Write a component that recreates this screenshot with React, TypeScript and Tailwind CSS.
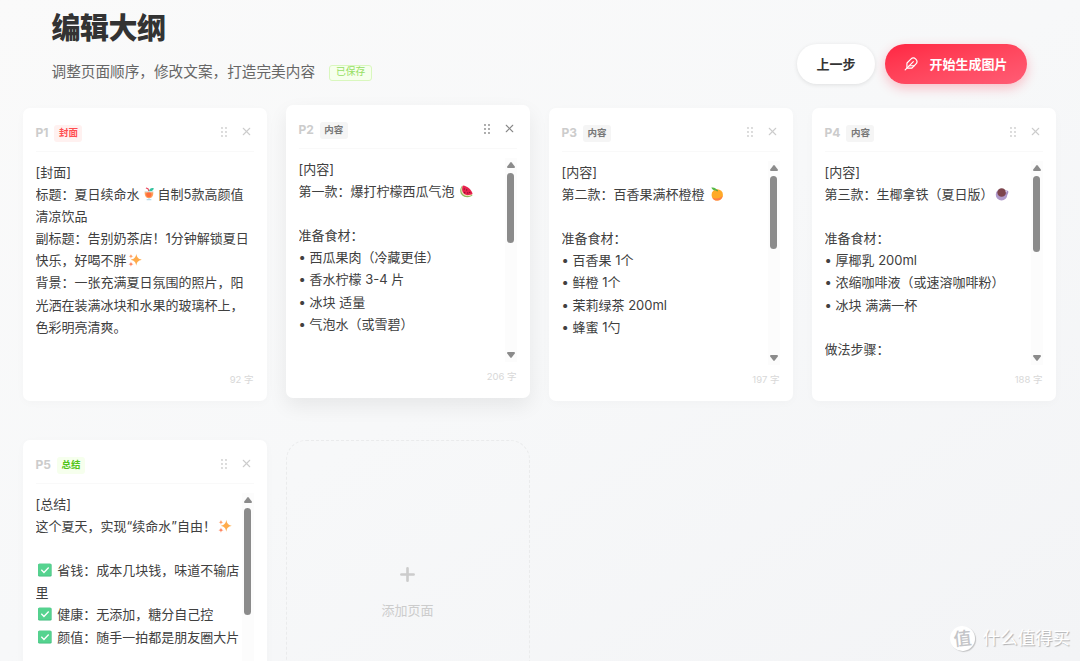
import type { ReactNode } from "react";
import { Feather, Plus, X } from "lucide-react";
import { clsx } from "clsx";

type PageType = "cover" | "content" | "summary";

interface OutlinePage {
  id: string;
  type: PageType;
  lines: ReactNode[];
  count?: number;
  thumb?: string;
  active?: boolean;
}

const typeLabels: Record<PageType, string> = {
  cover: "封面",
  content: "内容",
  summary: "总结",
};

const typeStyles: Record<PageType, string> = {
  cover: "bg-[#fff1f0] text-[#ff4d4f]",
  content: "bg-[#f5f5f5] text-[#777]",
  summary: "bg-[#f6ffed] text-[#52c41a]",
};

function Emoji({ className = "mx-[2px]", children }: { className?: string; children: ReactNode }) {
  return (
    <svg viewBox="0 0 16 16" className={clsx("inline-block h-[14px] w-[14px] align-[-2px]", className)}>
      {children}
    </svg>
  );
}

function Drink() {
  return (
    <Emoji>
      <path d="M8.5 6 6.8 2 4.500 1.200" fill="none" stroke="#e8475f" strokeWidth="1.300" />
      <path d="M8 4.500c.5-2.800 3-4 5.500-3-.3 2.300-2.200 3.700-4.200 3.700z" fill="#35c3a0" />
      <path d="M3.200 5h9.600c.6 3.600-.8 6.600-3 7.600H6.200C4 11.600 2.600 8.600 3.200 5z" fill="#ffa05c" />
      <circle cx="7.800" cy="8.600" r="3" fill="#ff6f3c" />
      <path d="M3.200 4.800h9.600l.1 1.200H3.100z" fill="#cdebf3" />
      <path d="M7.300 12.500h1.400v1.300h2v1.400H5.300v-1.400h2z" fill="#b9dbe9" />
    </Emoji>
  );
}

function Sparkles({ className }: { className?: string }) {
  return (
    <Emoji className={className}>
      <path d="M9.500.8c.7 4.300 2 5.800 6.200 6.900-4.400 1.200-5.600 2.600-6.200 7-.7-4.400-2-5.800-6.400-7C7.500 6.600 8.800 5.100 9.500.8z" fill="#ffab4a" />
      <path d="M3.400.8c.3 2 .9 2.500 2.700 2.900-1.800.4-2.400 1-2.700 2.900C3.100 4.700 2.500 4.100.7 3.700 2.500 3.300 3.100 2.800 3.400.8z" fill="#ff9f68" />
      <path d="M3.400 9.800c.3 2 .9 2.600 2.900 3-2 .4-2.600 1-2.900 3-.3-2-.9-2.600-2.900-3 2-.4 2.600-1 2.900-3z" fill="#ff8660" />
    </Emoji>
  );
}

function Watermelon() {
  return (
    <Emoji className="ml-[1px]">
      <path d="M3.500 2C-1 7.500 2 15 9.500 15c2.800 0 5-1 6-2.500z" fill="#8fb95c" />
      <path d="M4 2.300C.8 7.500 3.500 13.700 9.500 13.800c2.400 0 4.300-.6 5.600-1.500z" fill="#f3edc4" />
      <path d="M4.500 1.800C2 7 4.500 12.600 9.700 12.800c2.300 0 4.400-.5 5.800-1.600C14.500 7 9.500 2.200 4.500 1.800z" fill="#e8224e" />
      <path d="M6 5v1.500M8.800 6v1.500M6.500 9v1.500M10 9.500V11M12.300 9v1.300" stroke="#6d1028" strokeWidth="1" />
    </Emoji>
  );
}

function Tangerine() {
  return (
    <Emoji>
      <circle cx="8.300" cy="9" r="6.500" fill="#ffa928" />
      <path d="M2.200 11.300c3.300 2.900 8.900 2.400 12.300-1.300-.5 3.300-3.200 5.500-6.200 5.500-2.800 0-5.300-1.700-6.100-4.200z" fill="#ff7d45" />
      <path d="M1.500.7c3.200-.6 5.400.6 6.200 3-2.700.9-5-.2-6.200-3z" fill="#57b947" />
      <path d="M7.300 3 8.600 4.700" stroke="#3f9a3a" strokeWidth="1.200" />
    </Emoji>
  );
}

function Coconut() {
  return (
    <Emoji className="-ml-[2px]">
      <circle cx="7.500" cy="8.800" r="6.600" fill="#b19acb" />
      <path d="M11.500 4.500c2.500-1.200 4.200-.2 3.700 1.800-.3 1.600-1.500 3-3 3.700z" fill="#a68fc2" />
      <circle cx="7.600" cy="6.300" r="4.900" fill="#7d454d" />
      <circle cx="12.800" cy="5.300" r=".8" fill="#e8def3" />
    </Emoji>
  );
}

function CheckBox() {
  return (
    <Emoji>
      <rect x=".2" y=".8" width="15.300" height="14.700" rx="1.500" fill="#39b878" />
      <rect x=".2" y=".8" width="14.800" height="13.800" rx="1.500" fill="#55d38f" />
      <path d="m3.800 7.800 3 3 5.400-5.600" fill="none" stroke="#fff" strokeWidth="1.500" />
    </Emoji>
  );
}

function GripDots() {
  return (
    <svg viewBox="0 0 6 10" className="h-[10px] w-[6px]" fill="currentColor">
      {[1, 5, 9].map((y) => (
        <g key={y}>
          <circle cx="1" cy={y} r=".9" />
          <circle cx="5" cy={y} r=".9" />
        </g>
      ))}
    </svg>
  );
}

const pages: OutlinePage[] = [
  {
    id: "P1",
    type: "cover",
    count: 92,
    lines: [
      "[封面]",
      <>标题：夏日续命水<Drink />自制5款高颜值</>,
      "清凉饮品",
      "副标题：告别奶茶店！1分钟解锁夏日",
      <>快乐，好喝不胖<Sparkles className="mx-[1px]" /></>,
      "背景：一张充满夏日氛围的照片，阳",
      "光洒在装满冰块和水果的玻璃杯上，",
      "色彩明亮清爽。",
    ],
  },
  {
    id: "P2",
    type: "content",
    count: 206,
    thumb: "h-[70px]",
    active: true,
    lines: [
      "[内容]",
      <>第一款：爆打柠檬西瓜气泡 <Watermelon /></>,
      "",
      "准备食材：",
      "• 西瓜果肉（冷藏更佳）",
      "• 香水柠檬 3-4 片",
      "• 冰块 适量",
      "• 气泡水（或雪碧）",
    ],
  },
  {
    id: "P3",
    type: "content",
    count: 197,
    thumb: "h-[73px]",
    lines: [
      "[内容]",
      <>第二款：百香果满杯橙橙 <Tangerine /></>,
      "",
      "准备食材：",
      "• 百香果 1个",
      "• 鲜橙 1个",
      "• 茉莉绿茶 200ml",
      "• 蜂蜜 1勺",
    ],
  },
  {
    id: "P4",
    type: "content",
    count: 188,
    thumb: "h-[76px]",
    lines: [
      "[内容]",
      <>第三款：生椰拿铁（夏日版） <Coconut /></>,
      "",
      "准备食材：",
      "• 厚椰乳 200ml",
      "• 浓缩咖啡液（或速溶咖啡粉）",
      "• 冰块 满满一杯",
      "",
      "做法步骤：",
    ],
  },
  {
    id: "P5",
    type: "summary",
    thumb: "h-[107px]",
    lines: [
      "[总结]",
      <>这个夏天，实现“续命水”自由！ <Sparkles className="-ml-[2px]" /></>,
      "",
      <><CheckBox /> 省钱：成本几块钱，味道不输店</>,
      "里",
      <><CheckBox /> 健康：无添加，糖分自己控</>,
      <><CheckBox /> 颜值：随手一拍都是朋友圈大片</>,
    ],
  },
];

function ScrollBar({ thumb }: { thumb: string }) {
  return (
    <div className="flex w-[12px] shrink-0 flex-col items-center bg-[#fcfcfc] py-[4px] text-[#8b8b8b]">
      <svg viewBox="0 0 8 6" className="h-[6px] w-[8px]" fill="currentColor">
        <path d="M3.300.500Q4-.300 4.700.500L7.800 4.600Q8.300 6 7 6H1Q-.300 6 .200 4.600z" />
      </svg>
      <div className={clsx("mt-[5px] w-[7px] rounded-full bg-[#8b8b8b]", thumb)} />
      <svg viewBox="0 0 8 6" className="mt-auto h-[6px] w-[8px]" fill="currentColor">
        <path d="M3.300 5.500Q4 6.300 4.700 5.500L7.800 1.400Q8.300 0 7 0H1Q-.300 0 .200 1.400z" />
      </svg>
    </div>
  );
}

function OutlineCard({ page }: { page: OutlinePage }) {
  return (
    <div
      className={clsx(
        "flex h-[293px] flex-col rounded-[7px] bg-white px-[13px]",
        page.active
          ? "-translate-y-[3px] shadow-[0_8px_20px_rgba(0,0,0,0.07)]"
          : "shadow-[0_2px_10px_rgba(0,0,0,0.025)]"
      )}
    >
      {/* Page number, type and row actions */}
      <div className="flex h-[44px] shrink-0 items-center border-b border-[#f9f9f9] pt-[6px]">
        <span className="mt-px text-[12px] font-bold text-[#ccc]">{page.id}</span>
        <span
          className={clsx(
            "ml-[6px] mt-px flex h-[17px] items-center rounded-[3px] px-[4.500px] text-[9.500px] font-bold",
            typeStyles[page.type]
          )}
        >
          {typeLabels[page.type]}
        </span>
        <div
          className={clsx(
            "ml-auto flex items-center gap-[13px] pr-px pb-[2px]",
            page.active ? "text-[#888]" : "text-[#ccc]"
          )}
        >
          <GripDots />
          <X size={13} strokeWidth={2} />
        </div>
      </div>

      <div className="mt-[9px] flex h-[204px] shrink-0 justify-between overflow-hidden">
        <div className="whitespace-pre text-[13px] leading-[22.100px] text-[#404040]">
          {page.lines.map((line, i) => (
            <div key={i} className="h-[22.100px]">
              {line}
            </div>
          ))}
        </div>
        {page.thumb && <ScrollBar thumb={page.thumb} />}
      </div>

      {page.count && (
        <div className="mt-[8px] text-right text-[9.500px] leading-[14px] text-[#d8d8d8]">
          {page.count} 字
        </div>
      )}
    </div>
  );
}

export default function App() {
  return (
    <div
      lang="zh-CN"
      className="relative h-[661px] w-[1080px] overflow-hidden bg-linear-to-br from-[#fafafa] via-[#f7f8f9] to-[#f3f4f6] font-['Inter','Noto_Sans_CJK_SC',sans-serif]"
    >
      <header className="flex h-[108px] justify-between pl-[51.500px] pr-[53px]">
        <div className="pt-[8px]">
          <h1 className="text-[29px] font-extrabold leading-[42px] tracking-[-0.500px] text-[#333]">
            编辑大纲
          </h1>
          <div className="mt-[11px] flex items-center">
            <p className="text-[14.650px] leading-[22px] text-[#666]">
              调整页面顺序，修改文案，打造完美内容
            </p>
            <span className="ml-[14px] mt-px flex h-[16px] items-center rounded-[3px] border border-[#d9f7be] bg-[#f6ffed] px-[6px] text-[9.750px] text-[#95de64]">
              已保存
            </span>
          </div>
        </div>
        <div className="flex gap-[10px] pt-[44px]">
          <button className="h-[40px] w-[78px] rounded-full bg-white pt-px text-[13px] font-bold text-[#333] shadow-[0_1px_4px_rgba(0,0,0,0.1)]">
            上一步
          </button>
          <button className="flex h-[40px] w-[142px] items-center justify-center gap-[11px] rounded-full bg-linear-to-br from-[#ff2442] to-[#ff5c75] text-[13px] font-bold text-white shadow-[0_4px_12px_rgba(255,36,66,0.28)]">
            <Feather size={14} strokeWidth={2} />
            <span className="pt-px">开始生成图片</span>
          </button>
        </div>
      </header>

      <main className="grid grid-cols-[repeat(4,244px)] gap-x-[19px] gap-y-[39px] pl-[22.500px]">
        {pages.map((page) => (
          <OutlineCard key={page.id} page={page} />
        ))}
        <div className="flex h-[312px] flex-col items-center rounded-[20px] border-[1.500px] border-dashed border-[#eaebec] pt-[123px] text-[#ccc]">
          <Plus size={21} strokeWidth={3} />
          <span className="mt-[15px] text-[13px] leading-[20px]">添加页面</span>
        </div>
      </main>

      {/* Watermark over the bottom-right corner */}
      <div className="absolute right-[10px] bottom-[10px] flex items-center gap-[8px]">
        <span className="flex h-[25px] w-[25px] -rotate-6 items-center justify-center rounded-full bg-white text-[18px] font-medium text-[#c4c5c8] shadow-[1px_1px_1px_rgba(0,0,0,0.2)]">
          值
        </span>
        <span className="text-[17.500px] leading-[26px] text-white [text-shadow:1px_1px_1px_rgba(0,0,0,0.28)]">
          什么值得买
        </span>
      </div>
    </div>
  );
}
